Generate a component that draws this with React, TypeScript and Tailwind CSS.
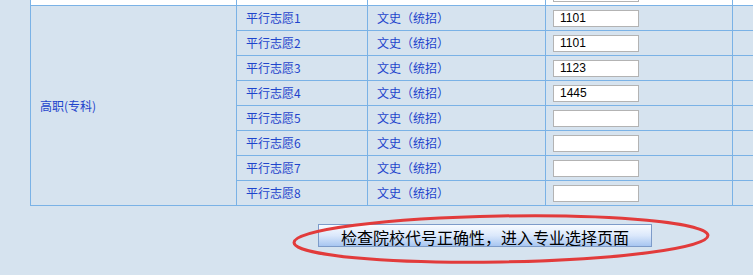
import React from "react";

const ROWS = [
  { name: "平行志愿1", code: "1101" },
  { name: "平行志愿2", code: "1101" },
  { name: "平行志愿3", code: "1123" },
  { name: "平行志愿4", code: "1445" },
  { name: "平行志愿5", code: "" },
  { name: "平行志愿6", code: "" },
  { name: "平行志愿7", code: "" },
  { name: "平行志愿8", code: "" },
];

function CodeInput({ value }: { value: string }) {
  return (
    <input
      readOnly
      value={value}
      className="block h-[17px] w-[86px] border border-[#b3b3b3] bg-white px-[6px] font-['Liberation_Sans',Arial,sans-serif] text-[12px] leading-none text-black outline-none"
    />
  );
}

export default function App() {
  const cell = "border border-[#7ab2e6] p-0 align-middle";
  return (
    <div className="relative h-[275px] w-[753px] overflow-hidden bg-[#d6e3ef] font-['Noto_Sans_CJK_SC',sans-serif]">
      <table className="ml-[30px] mt-[-20px] w-[910px] table-fixed border-collapse text-[12px] leading-none text-[#1e44cc]">
        <colgroup>
          <col className="w-[206px]" />
          <col className="w-[131px]" />
          <col className="w-[178px]" />
          <col className="w-[187px]" />
          <col />
        </colgroup>
        <tbody>
          {/* previous row, mostly scrolled off */}
          <tr className="h-[25px] bg-white">
            <td className={cell} />
            <td className={cell} />
            <td className={cell} />
            <td className={`${cell} pl-[7px]`}>
              <CodeInput value="" />
            </td>
            <td className={cell} />
          </tr>
          {ROWS.map((r, i) => (
            <tr key={r.name} className="h-[25px]">
              {i === 0 && (
                <td rowSpan={ROWS.length} className={`${cell} pl-[9px]`}>
                  高职(专科)
                </td>
              )}
              <td className={`${cell} pl-[9px]`}>{r.name}</td>
              <td className={`${cell} pl-[9px]`}>文史（统招）</td>
              <td className={`${cell} pl-[7px]`}>
                <CodeInput value={r.code} />
              </td>
              <td className={cell} />
            </tr>
          ))}
        </tbody>
      </table>

      <div className="ml-[30px] mt-[18px] flex w-[910px] justify-center">
        <button className="h-[23px] w-[334px] border border-[#7d9bc9] bg-linear-to-b from-[#f8fbff] via-[#dbe8fb] to-[#a8c6f1] pt-[2px] text-[16px] leading-none text-black">
          检查院校代号正确性，进入专业选择页面
        </button>
      </div>

      {/* red annotation circle */}
      <svg
        className="pointer-events-none absolute left-0 top-0"
        width="753"
        height="275"
        viewBox="0 0 753 275"
      >
        <ellipse
          cx="501"
          cy="239"
          rx="207"
          ry="23"
          transform="rotate(-1 501 239)"
          fill="none"
          stroke="#e23b3b"
          strokeWidth="3"
        />
      </svg>
    </div>
  );
}
